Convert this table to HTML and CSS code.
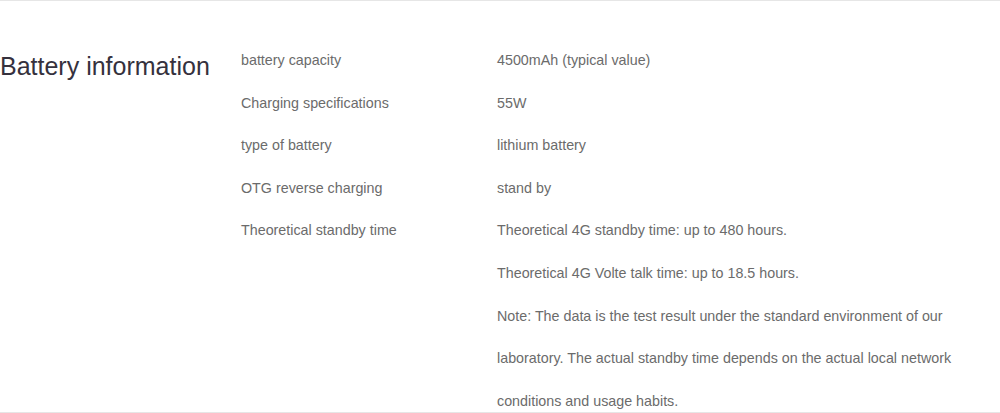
FILE: index.html
```html
<!DOCTYPE html>
<html lang="en">
<head>
<meta charset="utf-8">
<title>Battery information</title>
<link rel="stylesheet" href="styles.css">
</head>
<body>
<section class="spec">
  <h2 class="spec-title">Battery information</h2>
  <dl class="spec-list">
    <div class="spec-row"><dt>battery capacity</dt><dd>4500mAh (typical value)</dd></div>
    <div class="spec-row"><dt>Charging specifications</dt><dd>55W</dd></div>
    <div class="spec-row"><dt>type of battery</dt><dd>lithium battery</dd></div>
    <div class="spec-row"><dt>OTG reverse charging</dt><dd>stand by</dd></div>
    <div class="spec-row"><dt>Theoretical standby time</dt><dd>
      <p>Theoretical 4G standby time: up to 480 hours.</p>
      <p>Theoretical 4G Volte talk time: up to 18.5 hours.</p>
      <p>Note: The data is the test result under the standard environment of our laboratory. The actual standby time depends on the actual local network conditions and usage habits.</p>
    </dd></div>
  </dl>
</section>
</body>
</html>
```

FILE: styles.css
```css
html, body {
  margin: 0;
  padding: 0;
  background: #fff;
}
body {
  font-family: "Liberation Sans", Arial, sans-serif;
  height: 413px;
  overflow: hidden;
}
.spec {
  display: flex;
  border-top: 1px solid #e6e6e6;
  border-bottom: 1px solid #e6e6e6;
  padding-top: 38px;
  height: 373px;
}
.spec-title {
  width: 241px;
  flex: none;
  margin: 0;
  font-size: 25px;
  font-weight: normal;
  color: #35313d;
  line-height: 54px;
}
.spec-list {
  margin: 0;
  flex: none;
}
.spec-row {
  display: flex;
}
.spec-row dt {
  width: 256px;
  flex: none;
  font-size: 14.3px;
  line-height: 42.6px;
  color: #6b6b6b;
}
.spec-row dd {
  margin: 0;
  width: 462px;
  font-size: 14.3px;
  line-height: 42.6px;
  color: #6b6b6b;
}
.spec-row dd p {
  margin: 0;
}
```
